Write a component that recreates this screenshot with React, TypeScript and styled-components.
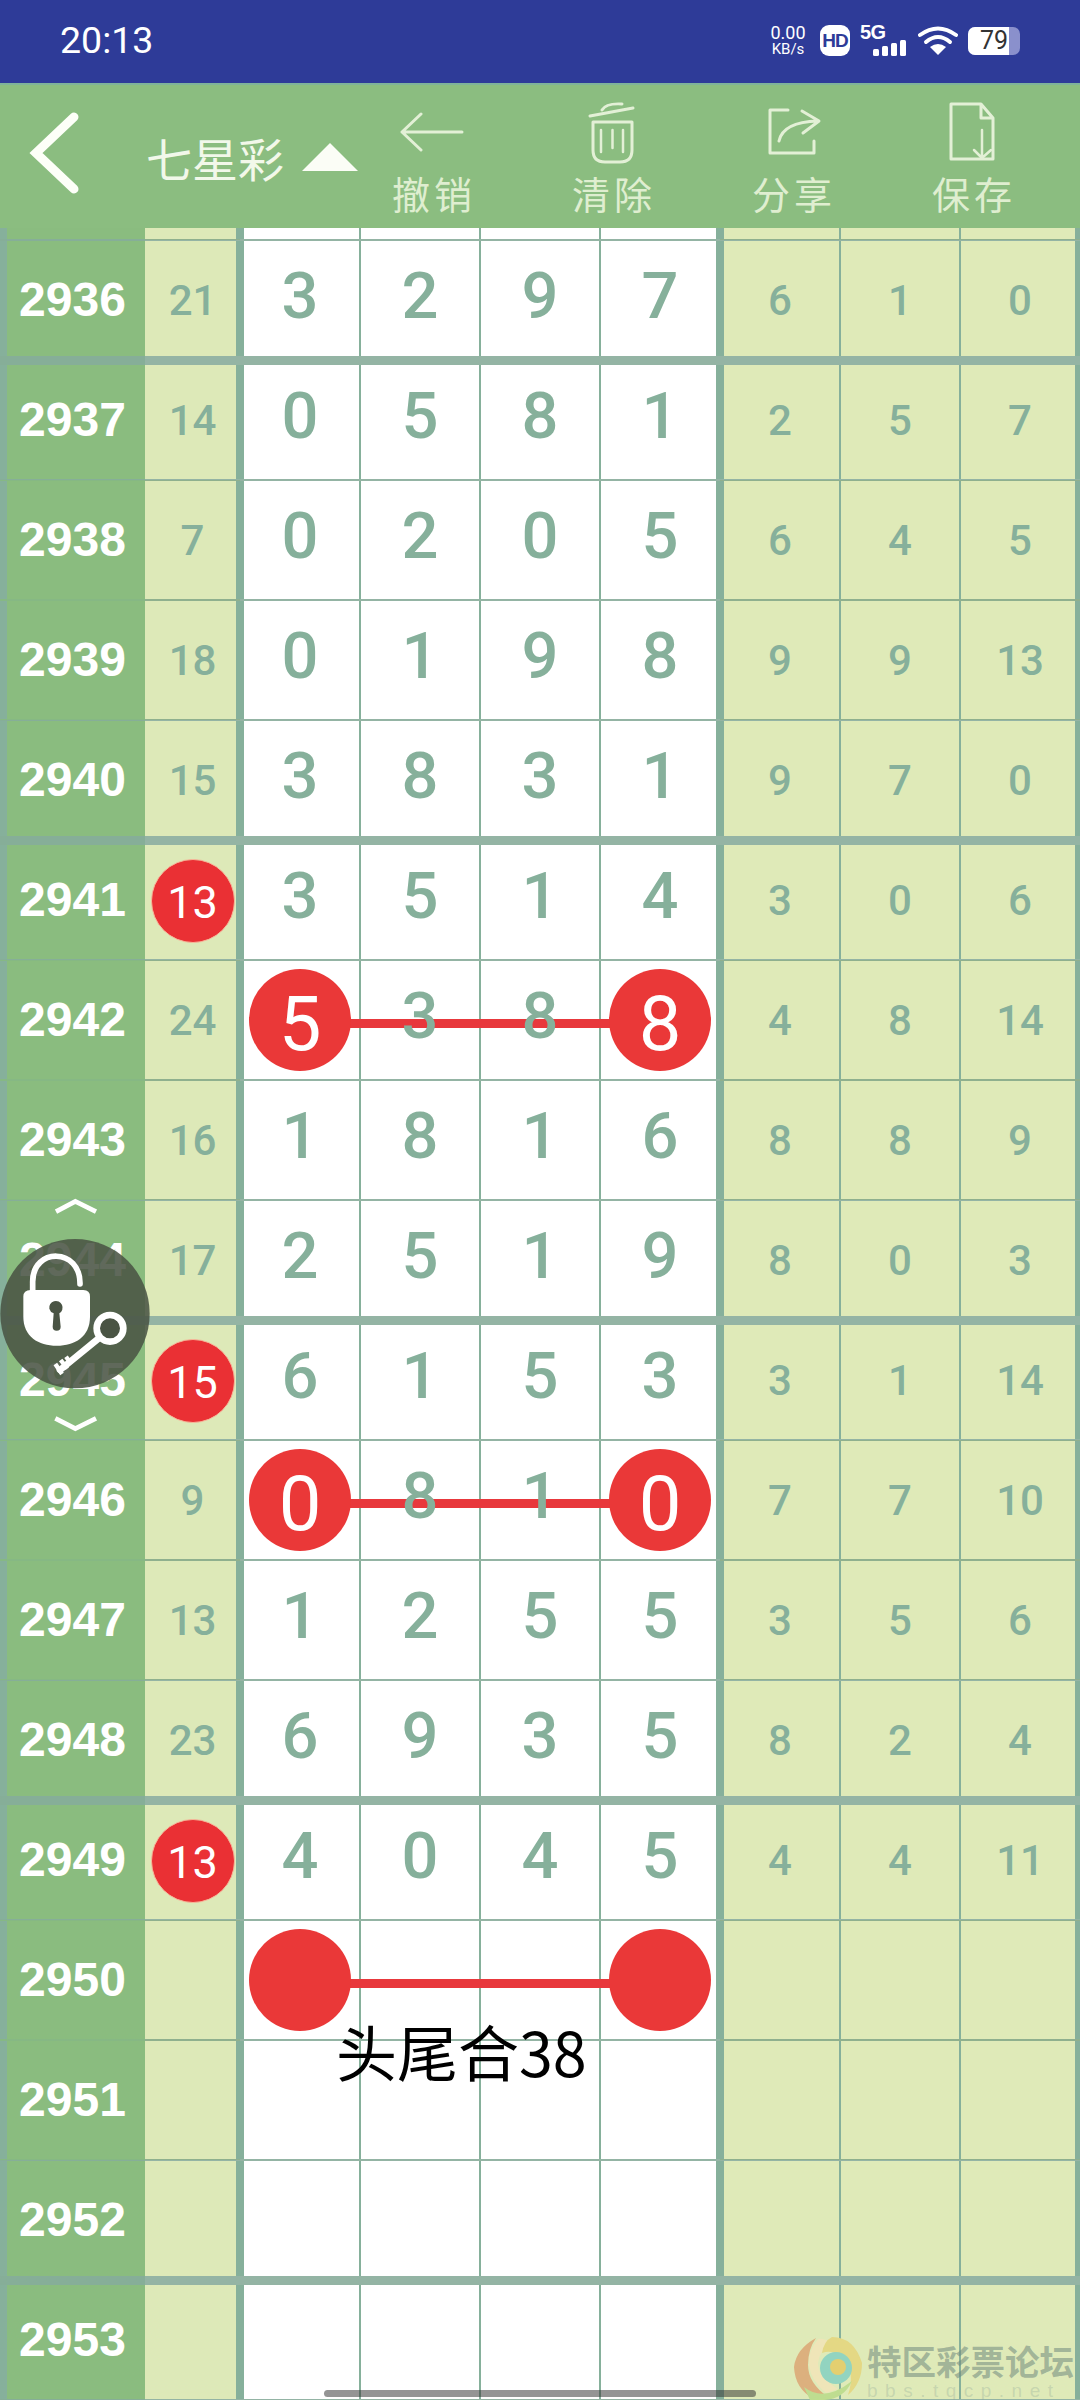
import React from "react";
import styled, { createGlobalStyle } from "styled-components";

const Global = createGlobalStyle`
  html, body { margin: 0; padding: 0; background: #fff; }
  * { box-sizing: border-box; }
`;

const Page = styled.div`
  position: relative;
  width: 1080px;
  height: 2400px;
  overflow: hidden;
  display: flex;
  flex-direction: column;
  font-family: Roboto, "Noto Sans CJK SC", sans-serif;
`;

const StatusBar = styled.div`
  height: 85px;
  flex: none;
  background: #2e3b98;
  border-bottom: 2px solid #7fb39a;
  display: flex;
  align-items: center;
  justify-content: space-between;
  padding: 0 60px 2px 60px;
  color: #fff;
`;
const Clock = styled.div`
  font-size: 37.500px;
  line-height: 1;
`;
const StatusIcons = styled.div`
  display: flex;
  align-items: center;
`;
const Speed = styled.div`
  width: 38px;
  display: flex;
  flex-direction: column;
  align-items: center;
  gap: 2px;
  font-family: Roboto, sans-serif;
`;
const SpeedValue = styled.span`
  font-size: 18px;
  line-height: 16px;
`;
const SpeedUnit = styled.span`
  font-size: 15px;
  line-height: 13px;
`;
const HdBadge = styled.div`
  width: 30px;
  height: 31px;
  margin-left: 13px;
  background: #fff;
  border-radius: 9px;
  color: #2e3b98;
  font-weight: 700;
  font-size: 19px;
  letter-spacing: -1px;
  display: flex;
  align-items: center;
  justify-content: center;
  font-family: "Liberation Sans", sans-serif;
`;
const Net = styled.div`
  width: 46px;
  height: 31px;
  margin-left: 10px;
  display: flex;
  flex-direction: column;
  justify-content: space-between;
`;
const NetLabel = styled.span`
  font-family: "Liberation Sans", sans-serif;
  font-weight: 700;
  font-size: 20px;
  line-height: 15px;
  letter-spacing: -0.5px;
`;
const Bars = styled.div`
  display: flex;
  align-items: flex-end;
  justify-content: flex-end;
  gap: 3px;
  margin-top: -3px;
`;
const Bar = styled.i<{ $h: number }>`
  display: block;
  width: 6px;
  height: ${(p) => p.$h}px;
  background: #fff;
  border-radius: 1.5px;
`;
const WifiIcon = styled.svg`
  display: block;
  margin-left: 12px;
`;
const Battery = styled.div`
  width: 52px;
  height: 28px;
  margin-left: 10px;
  border-radius: 7px;
  background: #8a90cc;
  overflow: hidden;
  display: flex;
`;
const BatteryFill = styled.div`
  width: 41px;
  background: #fff;
  color: #333;
  font-size: 25px;
  line-height: 28px;
  text-align: right;
  padding-right: 1px;
`;

const Header = styled.div`
  height: 143px;
  flex: none;
  background: #8bbd80;
  display: grid;
  grid-template-columns: 342px repeat(4, 180px);
`;
const TitleArea = styled.div`
  display: flex;
  align-items: center;
  padding: 0 0 0 27px;
`;
const BackIcon = styled.svg`
  display: block;
  flex: none;
  margin-right: 65px;
  margin-top: -8px;
`;
const Title = styled.div`
  flex: none;
  font-family: "Noto Sans CJK SC", sans-serif;
  font-size: 46px;
  line-height: 1;
  color: #f2f8ea;
  white-space: nowrap;
`;
const Caret = styled.div`
  width: 0;
  height: 0;
  margin-left: 18px;
  border-left: 28px solid transparent;
  border-right: 28px solid transparent;
  border-bottom: 28px solid #fbfdf6;
  flex: none;
`;
const Action = styled.div`
  display: flex;
  flex-direction: column;
  align-items: center;
`;
const ActionIcon = styled.div<{ $shift?: number }>`
  height: 89px;
  padding-top: 4px;
  padding-left: ${(p) => p.$shift ?? 0}px;
  display: flex;
  align-items: center;
  justify-content: center;
`;
const ActionLabel = styled.div`
  font-family: "Noto Sans CJK SC", sans-serif;
  font-size: 38px;
  line-height: 38px;
  letter-spacing: 4px;
  margin-right: -4px;
  color: #dfeed0;
`;

const Board = styled.div`
  flex: 1;
  display: flex;
  flex-direction: column;
`;
const Row = styled.div<{ $h?: number; $top: number; $bottom: number }>`
  position: relative;
  flex: none;
  height: ${(p) => p.$h ?? 120}px;
  display: grid;
  grid-template-columns: 145px 95px repeat(7, 120px);
  --t: ${(p) => p.$top}px;
  --b: ${(p) => p.$bottom}px;
`;

const Cell = styled.div<{ $l?: number; $r?: number; $line?: string }>`
  display: flex;
  align-items: center;
  justify-content: center;
  box-shadow:
    inset 0 var(--t) 0 ${(p) => p.$line ?? "#94b4a4"},
    inset 0 calc(-1 * var(--b)) 0 ${(p) => p.$line ?? "#94b4a4"},
    inset ${(p) => p.$l ?? 0}px 0 0 #86b09b,
    inset ${(p) => -(p.$r ?? 0)}px 0 0 #86b09b;
`;
const NumberCell = styled(Cell)`
  background: #8abc7f;
  color: #fff;
  font-family: "Liberation Sans", sans-serif;
  font-weight: 700;
  font-size: 48px;
  line-height: 1;
`;
const SideCell = styled(Cell)`
  background: #dde9b8;
  color: #86b09b;
  font-size: 42px;
  font-weight: 500;
  line-height: 1;
  padding-top: 2px;
`;
const MainCell = styled(Cell)`
  background: #fff;
`;
const RightCell = styled(Cell)`
  background: #dfeab8;
  color: #86b09b;
  font-size: 42px;
  font-weight: 500;
  line-height: 1;
  padding-top: 2px;
`;
const Digit = styled.span`
  position: relative;
  z-index: 1;
  color: #86b09b;
  font-size: 65px;
  font-weight: 500;
  line-height: 1;
  padding-bottom: 8px;
`;
const Ball = styled.div`
  position: relative;
  z-index: 2;
  width: 102px;
  height: 102px;
  border-radius: 50%;
  background: #ea3838;
  color: #fff;
  font-size: 76px;
  line-height: 1;
  display: flex;
  align-items: center;
  justify-content: center;
  padding-top: 8px;
`;
const SmallBall = styled.div`
  width: 84px;
  height: 84px;
  border-radius: 50%;
  background: #ea3034;
  border: 1px solid #f7b79a;
  color: #fff;
  font-size: 45px;
  font-weight: 400;
  line-height: 1;
  display: flex;
  align-items: center;
  justify-content: center;
  padding-top: 2px;
`;
const Link = styled.div`
  position: absolute;
  left: 300px;
  width: 360px;
  top: 59px;
  height: 9px;
  background: #e8383c;
`;
const Note = styled.div`
  position: absolute;
  left: 336px;
  top: 2016px;
  font-family: "Noto Sans CJK SC", sans-serif;
  font-size: 61px;
  line-height: 70px;
  color: #000;
  white-space: nowrap;
  z-index: 3;
`;
const LockWidget = styled.svg`
  position: absolute;
  left: 0;
  top: 1195px;
  z-index: 4;
`;
const HomeBar = styled.div`
  position: absolute;
  left: 324px;
  top: 2390px;
  width: 432px;
  height: 7px;
  border-radius: 4px;
  background: rgba(50, 50, 50, 0.52);
  z-index: 5;
`;
const Watermark = styled.div`
  position: absolute;
  left: 794px;
  top: 2337px;
  width: 286px;
  height: 63px;
  display: flex;
  z-index: 5;
`;
const WatermarkLogo = styled.svg`
  display: block;
  flex: none;
`;
const WatermarkText = styled.div`
  margin-left: 5px;
  padding-top: 5px;
  display: flex;
  flex-direction: column;
  gap: 3px;
`;
const WatermarkTitle = styled.span`
  font-family: "Noto Sans CJK SC", sans-serif;
  font-weight: 700;
  font-size: 34.500px;
  line-height: 36px;
  color: rgba(110, 135, 125, 0.55);
  white-space: nowrap;
`;
const WatermarkSub = styled.span`
  font-family: "Liberation Sans", sans-serif;
  font-size: 19px;
  line-height: 19px;
  letter-spacing: 7.500px;
  color: rgba(140, 165, 150, 0.3);
  white-space: nowrap;
`;

type RowData = {
  n: number;
  side?: number;
  hot?: boolean;
  main?: number[];
  balls?: boolean;
  right?: number[];
};

const rows: RowData[] = [
  { n: 2936, side: 21, main: [3, 2, 9, 7], right: [6, 1, 0] },
  { n: 2937, side: 14, main: [0, 5, 8, 1], right: [2, 5, 7] },
  { n: 2938, side: 7, main: [0, 2, 0, 5], right: [6, 4, 5] },
  { n: 2939, side: 18, main: [0, 1, 9, 8], right: [9, 9, 13] },
  { n: 2940, side: 15, main: [3, 8, 3, 1], right: [9, 7, 0] },
  { n: 2941, side: 13, hot: true, main: [3, 5, 1, 4], right: [3, 0, 6] },
  { n: 2942, side: 24, main: [5, 3, 8, 8], balls: true, right: [4, 8, 14] },
  { n: 2943, side: 16, main: [1, 8, 1, 6], right: [8, 8, 9] },
  { n: 2944, side: 17, main: [2, 5, 1, 9], right: [8, 0, 3] },
  { n: 2945, side: 15, hot: true, main: [6, 1, 5, 3], right: [3, 1, 14] },
  { n: 2946, side: 9, main: [0, 8, 1, 0], balls: true, right: [7, 7, 10] },
  { n: 2947, side: 13, main: [1, 2, 5, 5], right: [3, 5, 6] },
  { n: 2948, side: 23, main: [6, 9, 3, 5], right: [8, 2, 4] },
  { n: 2949, side: 13, hot: true, main: [4, 0, 4, 5], right: [4, 4, 11] },
  { n: 2950, balls: true },
  { n: 2951 },
  { n: 2952 },
  { n: 2953 },
];

const thickAfter = new Set([2936, 2940, 2944, 2948, 2952]);
const NUM_LINE = "#86b884";
const SIDE_LINE = "#8fb08e";

function edge(n: number) {
  return {
    top: thickAfter.has(n - 1) ? 5 : 1,
    bottom: thickAfter.has(n) ? 4 : 1,
  };
}

function lineFor(top: number, bottom: number, thin: string) {
  return top > 1 || bottom > 1 ? undefined : thin;
}

function BoardRow({ r }: { r: RowData }) {
  const { top, bottom } = edge(r.n);
  const main = r.main ?? [];
  const isBall = (i: number) => r.balls && (i === 0 || i === 3);
  return (
    <Row $top={top} $bottom={bottom}>
      <NumberCell $l={7} $line={top > 1 || bottom > 1 ? "#86ae98" : NUM_LINE}>
        {r.n}
      </NumberCell>
      <SideCell $r={4} $line={lineFor(top, bottom, SIDE_LINE)}>
        {r.hot ? <SmallBall>{r.side}</SmallBall> : r.side}
      </SideCell>
      {[0, 1, 2, 3].map((i) => (
        <MainCell key={i} $l={i === 0 ? 4 : 1} $r={i === 3 ? 4 : 1}>
          {isBall(i) ? (
            <Ball>{main[i]}</Ball>
          ) : main[i] !== undefined ? (
            <Digit>{main[i]}</Digit>
          ) : null}
        </MainCell>
      ))}
      {[0, 1, 2].map((i) => (
        <RightCell key={i} $l={i === 0 ? 4 : 1} $r={i === 2 ? 5 : 1} $line={lineFor(top, bottom, SIDE_LINE)}>
          {r.right?.[i]}
        </RightCell>
      ))}
      {r.balls && <Link />}
    </Row>
  );
}

const strokeProps = {
  fill: "none",
  stroke: "#e3f0d6",
  strokeWidth: 3,
  strokeLinecap: "round" as const,
  strokeLinejoin: "round" as const,
};

export default function App() {
  return (
    <Page>
      <Global />
      <StatusBar>
        <Clock>20:13</Clock>
        <StatusIcons>
          <Speed>
            <SpeedValue>0.00</SpeedValue>
            <SpeedUnit>KB/s</SpeedUnit>
          </Speed>
          <HdBadge>HD</HdBadge>
          <Net>
            <NetLabel>5G</NetLabel>
            <Bars>
              <Bar $h={7} />
              <Bar $h={10} />
              <Bar $h={13} />
              <Bar $h={16} />
            </Bars>
          </Net>
          <WifiIcon width="40" height="31" viewBox="0 0 40 31">
            <path d="M2 10 Q20 -3 38 10" fill="none" stroke="#fff" strokeWidth="4" strokeLinecap="round" />
            <path d="M8 17 Q20 7 32 17" fill="none" stroke="#fff" strokeWidth="4" strokeLinecap="round" />
            <path d="M20 30 L12 22 Q20 16 28 22 Z" fill="#fff" />
          </WifiIcon>
          <Battery>
            <BatteryFill>79</BatteryFill>
          </Battery>
        </StatusIcons>
      </StatusBar>
      <Header>
        <TitleArea>
          <BackIcon width="54" height="84" viewBox="0 0 54 84">
            <path d="M47 6 L9 42 L47 78" fill="none" stroke="#fdfff8" strokeWidth="9" strokeLinecap="round" />
          </BackIcon>
          <Title>七星彩</Title>
          <Caret />
        </TitleArea>
        <Action>
          <ActionIcon>
            <svg width="64" height="40" viewBox="0 0 64 40">
              <path d="M2 20 H62 M21 2 L2 20 L21 38" {...strokeProps} />
            </svg>
          </ActionIcon>
          <ActionLabel>撤销</ActionLabel>
        </Action>
        <Action>
          <ActionIcon>
            <svg width="48" height="64" viewBox="0 0 48 64">
              <path d="M2 16 L45 8 M14 10 Q18 3 34 4" {...strokeProps} />
              <path d="M5 22 H44 V50 Q44 62 32 62 H17 Q5 62 5 50 Z M5 22" {...strokeProps} />
              <path d="M13 30 V52 M24.500 30 V48 M35 30 V52" {...strokeProps} strokeWidth={2.500} />
            </svg>
          </ActionIcon>
          <ActionLabel>清除</ActionLabel>
        </Action>
        <Action>
          <ActionIcon $shift={6}>
            <svg width="54" height="48" viewBox="0 0 54 48">
              <path d="M20 2 H2 V45 H46 V33" {...strokeProps} />
              <path d="M11 33 Q15 14 50 13 M34 3 L51 13 L35 25" {...strokeProps} />
            </svg>
          </ActionIcon>
          <ActionLabel>分享</ActionLabel>
        </Action>
        <Action>
          <ActionIcon>
            <svg width="46" height="60" viewBox="0 0 46 60">
              <path d="M2 2 H32 L44 16 V57 H2 Z M32 2 V16 H44" {...strokeProps} />
              <path d="M33 28 V56 M25 48 L33 56 L42 48" {...strokeProps} strokeWidth={2.500} />
            </svg>
          </ActionIcon>
          <ActionLabel>保存</ActionLabel>
        </Action>
      </Header>
      <Board>
        <Row $h={12} $top={0} $bottom={1}>
          <NumberCell $l={7} $line="#86ae98" />
          <SideCell $r={4} $line={SIDE_LINE} />
          <MainCell $l={4} $r={1} />
          <MainCell $l={1} $r={1} />
          <MainCell $l={1} $r={1} />
          <MainCell $l={1} $r={4} />
          <RightCell $l={4} $r={1} $line={SIDE_LINE} />
          <RightCell $l={1} $r={1} $line={SIDE_LINE} />
          <RightCell $l={1} $r={5} $line={SIDE_LINE} />
        </Row>
        {rows.map((r) => (
          <BoardRow key={r.n} r={r} />
        ))}
      </Board>
      <Note>头尾合38</Note>
      <LockWidget width="150" height="240" viewBox="0 105 450 720">
        <path d="M168 155 L226 124 L288 155" fill="none" stroke="#fff" strokeWidth="14" />
        <path d="M166 775 L226 806 L288 775" fill="none" stroke="#fff" strokeWidth="14" />
        <circle cx="225" cy="461" r="224" fill="#4a5444" fillOpacity="0.88" />
        <path d="M98 395 V365 C98 262 242 262 240 372" fill="none" stroke="#fff" strokeWidth="17" strokeLinecap="round" />
        <path d="M92 390 H250 Q270 390 270 410 V470 C270 530 225 557 170 557 C115 557 70 530 70 470 V410 Q70 390 92 390 Z" fill="#fff" />
        <path d="M148 446 a20 20 0 1 1 30 14 l4 40 a10 10 0 0 1 -24 0 l3 -40 a20 20 0 0 1 -13 -14 Z" fill="#4a5444" />
        <circle cx="330" cy="505" r="40" fill="#4a5444" stroke="#fff" strokeWidth="20" />
        <path d="M296 535 L180 630" stroke="#fff" strokeWidth="20" strokeLinecap="round" />
        <path d="M166 612 L186 642 M182 600 L202 626 M198 590 L214 612" stroke="#fff" strokeWidth="13" />
      </LockWidget>
      <Watermark>
        <WatermarkLogo width="68" height="63" viewBox="0 0 68 63">
          <path d="M22 1 Q2 12 0 30 Q1 52 20 62 L34 60 Q14 46 14 28 Q14 12 22 1 Z" fill="#dcaa78" fillOpacity="0.9" />
          <path d="M24 2 Q14 14 15 28 Q17 44 32 56 L44 52 Q24 40 24 26 Q26 12 38 6 Q30 1 24 2 Z" fill="#efe5b8" />
          <path d="M38 0 Q60 0 68 26 Q68 46 54 58 Q62 34 48 20 Q38 12 28 16 Q30 4 38 0 Z" fill="#e4d884" />
          <circle cx="42" cy="31" r="16" fill="#92d4c0" />
          <circle cx="44" cy="30" r="8" fill="#e3cf70" />
          <path d="M10 50 Q30 66 58 44 Q50 62 30 63 L16 63 Z" fill="#bedd90" />
        </WatermarkLogo>
        <WatermarkText>
          <WatermarkTitle>特区彩票论坛</WatermarkTitle>
          <WatermarkSub>bbs.tqcp.net</WatermarkSub>
        </WatermarkText>
      </Watermark>
      <HomeBar />
    </Page>
  );
}
